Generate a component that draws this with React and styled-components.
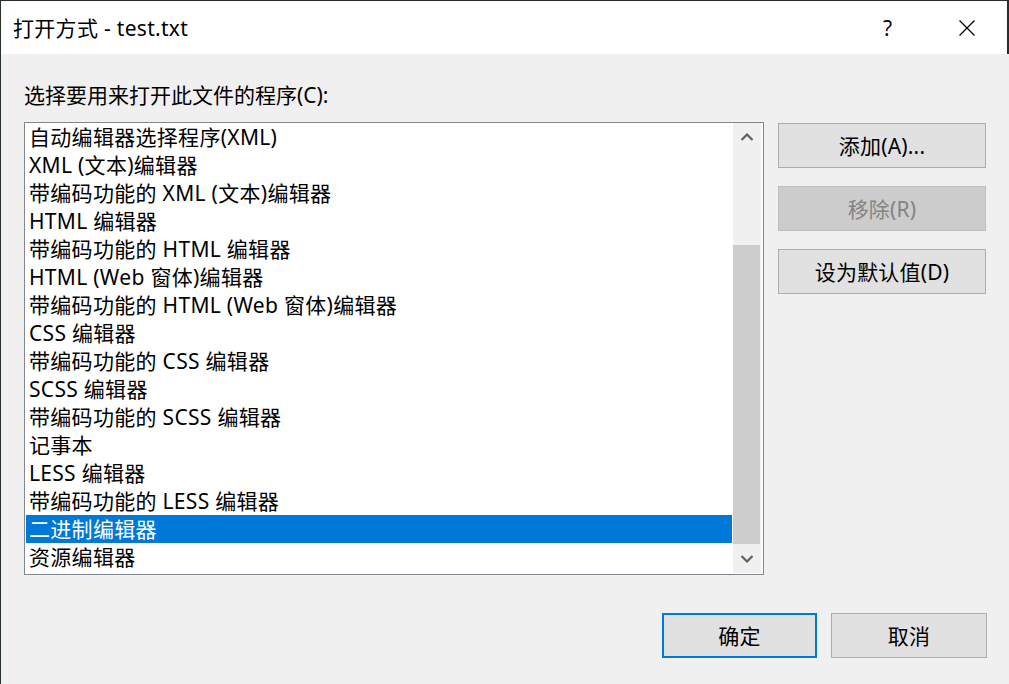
import React from "react";
import styled, { createGlobalStyle } from "styled-components";

const Global = createGlobalStyle`
  html, body { margin: 0; padding: 0; background: #f0f0f0; }
  body { font-family: "Noto Sans", "Noto Sans CJK SC", sans-serif; }
  * { box-sizing: border-box; }
`;

const Window = styled.div`
  width: 1009px;
  height: 684px;
  display: flex;
  flex-direction: column;
  border-left: 1px solid #263128;
  background: #f0f0f0;
  font-family: "Noto Sans", "Noto Sans CJK SC", sans-serif;
  font-size: 21px;
  color: #000;
  overflow: hidden;
`;

const TitleBar = styled.div`
  height: 54px;
  flex: none;
  display: flex;
  align-items: center;
  background: #fff;
  border-top: 1px solid #2b2b2b;
  border-right: 2px solid #2b2b2b;
  padding: 0 1px 0 12px;
`;

const Title = styled.div`
  flex: 1;
  font-size: 21px;
  line-height: 28px;
  letter-spacing: 0.3px;
`;

const TitleButton = styled.div`
  width: 79px;
  height: 40px;
  display: flex;
  align-items: center;
  justify-content: center;
  font-size: 21px;
  color: #111;
`;

const Body = styled.div`
  flex: 1;
  display: flex;
  flex-direction: column;
  padding: 27px 22px 0 23px;
`;

const Label = styled.div`
  line-height: 28px;
  height: 28px;
`;

const Main = styled.div`
  margin-top: 13px;
  display: grid;
  grid-template-columns: 740px 208px;
  column-gap: 14px;
  align-items: start;
`;

const ListBox = styled.div`
  height: 453px;
  border: 1px solid #828790;
  background: #fff;
  display: flex;
  padding: 0 2px 0 1px;
`;

const Rows = styled.div`
  flex: 1;
  display: flex;
  flex-direction: column;
  padding-right: 1px;
`;

const Row = styled.div`
  height: 28px;
  line-height: 28px;
  padding-left: 3px;
  letter-spacing: 0.3px;
  white-space: nowrap;
  background: ${(p) => (p.$selected ? "#0078d7" : "transparent")};
  color: ${(p) => (p.$selected ? "#fff" : "#000")};
`;

const ScrollBar = styled.div`
  width: 28px;
  height: 450px;
  background: #f0f0f0;
  display: flex;
  flex-direction: column;
`;

const ArrowBtn = styled.div`
  height: 28px;
  flex: none;
  display: flex;
  align-items: center;
  justify-content: center;
`;

const Track = styled.div`
  flex: 1;
  display: flex;
  flex-direction: column;
  padding: 94px 1px 1px 0;
`;

const Thumb = styled.div`
  flex: 1;
  background: #cdcdcd;
`;

const SideButtons = styled.div`
  display: flex;
  flex-direction: column;
  gap: 18px;
  padding-top: 1px;
`;

const Button = styled.div`
  height: 45px;
  width: ${(p) => p.$width || "100%"};
  display: flex;
  align-items: center;
  justify-content: center;
  background: ${(p) => (p.$disabled ? "#cccccc" : "#e1e1e1")};
  border: ${(p) =>
    p.$primary ? "2px solid #0078d7" : p.$disabled ? "1px solid #bfbfbf" : "1px solid #adadad"};
  color: ${(p) => (p.$disabled ? "#838383" : "#000")};
  font-size: 21px;
  line-height: 28px;
  letter-spacing: 0.2px;
`;

const Footer = styled.div`
  margin-top: 38px;
  display: flex;
  justify-content: flex-end;
  gap: 14px;
`;

const Chevron = ({ up }) => (
  <svg width="14" height="10" viewBox="0 0 14 10">
    <path
      d={up ? "M1.5 8 L7 2.5 L12.5 8" : "M1.5 2 L7 7.5 L12.5 2"}
      fill="none"
      stroke="#606060"
      strokeWidth="2.2"
    />
  </svg>
);

const items = [
  "自动编辑器选择程序(XML)",
  "XML (文本)编辑器",
  "带编码功能的 XML (文本)编辑器",
  "HTML 编辑器",
  "带编码功能的 HTML 编辑器",
  "HTML (Web 窗体)编辑器",
  "带编码功能的 HTML (Web 窗体)编辑器",
  "CSS 编辑器",
  "带编码功能的 CSS 编辑器",
  "SCSS 编辑器",
  "带编码功能的 SCSS 编辑器",
  "记事本",
  "LESS 编辑器",
  "带编码功能的 LESS 编辑器",
  "二进制编辑器",
  "资源编辑器",
];

export default function App() {
  return (
    <>
      <Global />
      <Window>
        <TitleBar>
          <Title>打开方式 - test.txt</Title>
          <TitleButton>?</TitleButton>
          <TitleButton>
            <svg width="16" height="16" viewBox="0 0 16 16">
              <path d="M0.5 0.5 L15.5 15.5 M15.5 0.5 L0.5 15.5" stroke="#000" strokeWidth="1.2" />
            </svg>
          </TitleButton>
        </TitleBar>
        <Body>
          <Label>选择要用来打开此文件的程序(C):</Label>
          <Main>
            <ListBox>
              <Rows>
                {items.map((t, i) => (
                  <Row key={t} $selected={i === 14}>
                    {t}
                  </Row>
                ))}
              </Rows>
              <ScrollBar>
                <ArrowBtn>
                  <Chevron up />
                </ArrowBtn>
                <Track>
                  <Thumb />
                </Track>
                <ArrowBtn>
                  <Chevron />
                </ArrowBtn>
              </ScrollBar>
            </ListBox>
            <SideButtons>
              <Button>添加(A)...</Button>
              <Button $disabled>移除(R)</Button>
              <Button>设为默认值(D)</Button>
            </SideButtons>
          </Main>
          <Footer>
            <Button $primary $width="155px">确定</Button>
            <Button $width="156px">取消</Button>
          </Footer>
        </Body>
      </Window>
    </>
  );
}
